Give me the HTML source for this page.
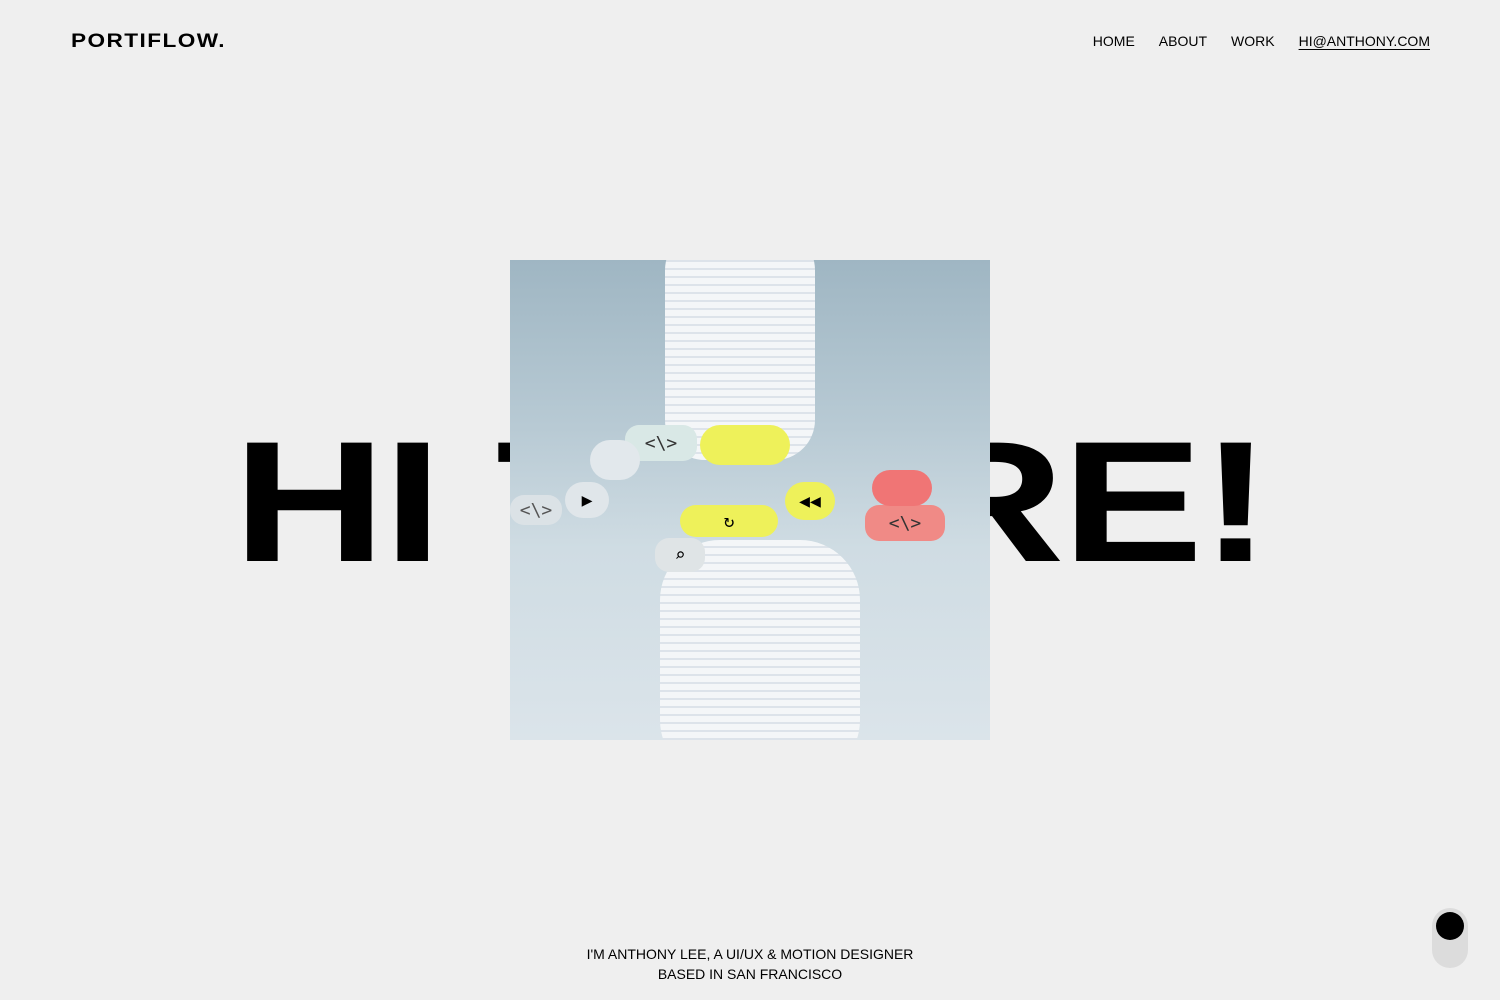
<!DOCTYPE html>
<html><head><style>
*{margin:0;padding:0;box-sizing:border-box}
body{width:1500px;height:1000px;background:#efefef;position:relative;overflow:hidden;font-family:"Liberation Sans",sans-serif;color:#000}
.logo{position:absolute;left:71px;top:31px;font-size:19px;font-weight:900;letter-spacing:1.2px;transform:scaleX(1.19);transform-origin:left}
.nav{position:absolute;top:33px;right:70px;font-size:14px;display:flex;gap:24px}
.nav span:last-child{text-decoration:underline;text-underline-offset:3px;text-decoration-thickness:1px}
.big{position:absolute;left:233px;top:416px;font-size:172px;font-weight:700;white-space:nowrap;line-height:1;transform:scaleX(1.23);transform-origin:left;letter-spacing:-2px}
.img{position:absolute;left:510px;top:260px;width:480px;height:480px;overflow:hidden;background:linear-gradient(180deg,#9fb6c3 0%,#b8cad4 35%,#cfdce3 60%,#dbe4ea 100%)}
.col{position:absolute;border-radius:40px;background:repeating-linear-gradient(180deg,#f4f6f8 0 6px,#dde3ea 6px 8px)}
.pill{position:absolute;border-radius:14px;display:flex;align-items:center;justify-content:center;font-size:18px;font-family:"DejaVu Sans Mono",monospace}
.bottom{position:absolute;left:0;width:1500px;top:944px;text-align:center;font-size:14px;line-height:20px}
.tog{position:absolute;left:1432px;top:908px;width:36px;height:60px;border-radius:18px;background:#dcdcdc}
.tog::after{content:"";position:absolute;left:4px;top:4px;width:28px;height:28px;border-radius:50%;background:#000}
</style></head><body>
<div class="logo">PORTIFLOW.</div>
<div class="nav"><span>HOME</span><span>ABOUT</span><span>WORK</span><span>HI@ANTHONY.COM</span></div>
<div class="big">HI THERE!</div>
<div class="img">
<div class="col" style="left:155px;top:-30px;width:150px;height:230px"></div>
<div class="col" style="left:150px;top:280px;width:200px;height:240px;border-radius:60px"></div>
<div class="pill" style="left:190px;top:165px;width:90px;height:40px;background:#eef15a;border-radius:20px"></div>
<div class="pill" style="left:115px;top:165px;width:72px;height:36px;background:#d9e8e6;color:#333">&lt;\&gt;</div>
<div class="pill" style="left:80px;top:180px;width:50px;height:40px;background:#e2e8ec;border-radius:20px"></div>
<div class="pill" style="left:275px;top:222px;width:50px;height:38px;background:#eef15a;border-radius:20px">◀◀</div>
<div class="pill" style="left:170px;top:245px;width:98px;height:32px;background:#eef15a;border-radius:16px">↻</div>
<div class="pill" style="left:145px;top:278px;width:50px;height:34px;background:#dfe4e6">⌕</div>
<div class="pill" style="left:355px;top:245px;width:80px;height:36px;background:#f08a86;color:#333">&lt;\&gt;</div>
<div class="pill" style="left:362px;top:210px;width:60px;height:36px;background:#f07575;border-radius:18px"></div>
<div class="pill" style="left:0;top:235px;width:52px;height:30px;background:#dbe2e6;color:#555">&lt;\&gt;</div>
<div class="pill" style="left:55px;top:222px;width:44px;height:36px;background:#e0e6ea;border-radius:18px">▶</div>
</div>
<div class="bottom">I'M ANTHONY LEE, A UI/UX &amp; MOTION DESIGNER<br>BASED IN SAN FRANCISCO</div>
<div class="tog"></div>
</body></html>
